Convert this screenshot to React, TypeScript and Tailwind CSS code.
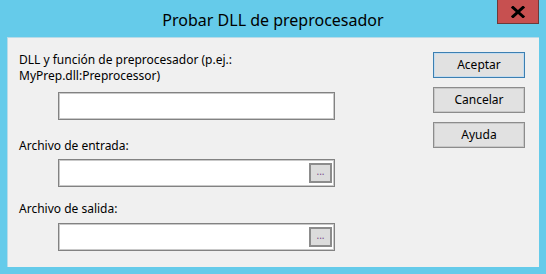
import React from "react";

// Win8-style dialog: "Probar DLL de preprocesador"

function FileField({ browse }: { browse?: boolean }) {
  return (
    <div className="ml-[39px] flex h-[28px] w-[277px] items-center justify-end border border-[#828282] bg-white shadow-[inset_0_0_0_1px_#c9c9c9]">
      {browse && (
        <button className="mr-[2px] flex h-[20px] w-[23px] items-center justify-center border-2 border-[#8c8c8c] bg-[#dcdcdc] pb-[4px] text-[10px] leading-none text-[#7a4a8a]">
          ...
        </button>
      )}
    </div>
  );
}

function DlgButton({ label, primary }: { label: string; primary?: boolean }) {
  return (
    <button
      className={
        "h-[26px] w-[92px] border bg-[#e1e1e1] text-[12px] text-black " +
        (primary ? "border-[#3c7fb1] shadow-[inset_0_0_0_1px_#c4dcef]" : "border-[#8c8c8c] shadow-[inset_0_0_0_1px_#c8c8c8]")
      }
    >
      {label}
    </button>
  );
}

export default function App() {
  return (
    <div
      className="flex h-[274px] w-[546px] flex-col bg-[#65cbea]"
      style={{ fontFamily: '"Noto Sans", "Open Sans", sans-serif' }}
    >
      {/* title bar */}
      <div className="relative flex h-[37px] shrink-0 items-center justify-center pt-[2px]">
        <span className="text-[16px] text-black">Probar DLL de preprocesador</span>
        <div className="absolute right-[7px] top-0 flex h-[24px] w-[42px] items-center justify-center border border-t-0 border-[#6b3a3a] bg-[#c75050]">
          <svg width="14" height="12" viewBox="0 0 14 12">
            <path d="M2 1.5 L12 10.5 M12 1.5 L2 10.5" stroke="#000" strokeWidth="3" strokeLinecap="square" />
          </svg>
        </div>
      </div>

      {/* body */}
      <div className="mx-[7px] mb-[7px] flex flex-1 border-l border-t border-[#b8dbe8] bg-[#f0f0f0]">
        <div className="flex flex-col pl-[11px] pt-[14px] text-[12px] leading-[16px] text-black">
          <div>
            DLL y función de preprocesador (p.ej.:
            <br />
            MyPrep.dll:Preprocessor)
          </div>
          <div className="mt-[8px]">
            <FileField />
          </div>
          <div className="mt-[18px]">Archivo de entrada:</div>
          <div className="mt-[5px]">
            <FileField browse />
          </div>
          <div className="mt-[14px]">Archivo de salida:</div>
          <div className="mt-[6px]">
            <FileField browse />
          </div>
        </div>

        <div className="ml-auto mr-[14px] flex flex-col gap-[9px] pt-[14px]">
          <DlgButton label="Aceptar" primary />
          <DlgButton label="Cancelar" />
          <DlgButton label="Ayuda" />
        </div>
      </div>
    </div>
  );
}
